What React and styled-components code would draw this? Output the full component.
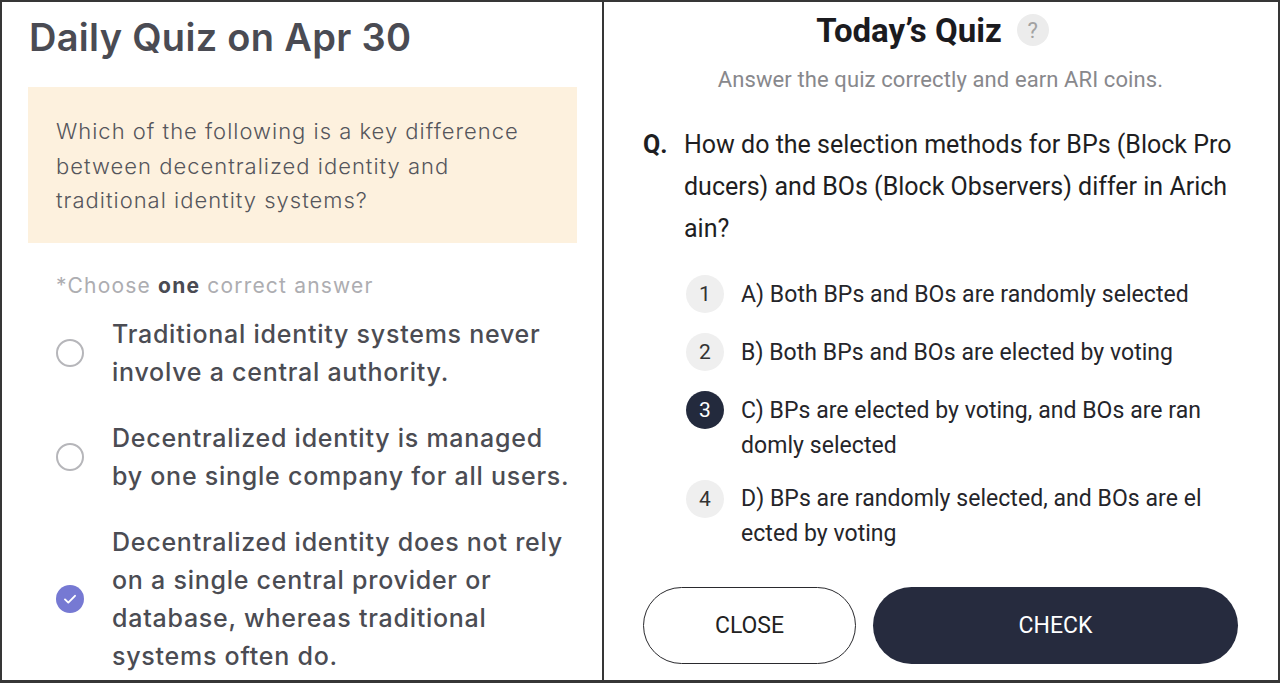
import React from "react";
import styled, { createGlobalStyle } from "styled-components";

const Global = createGlobalStyle`
  html, body { margin: 0; padding: 0; background: #fff; }
  * { box-sizing: border-box; }
`;

const Frame = styled.div`
  width: 1280px;
  height: 683px;
  border: 2px solid #363636;
  border-bottom-width: 3px;
  display: grid;
  grid-template-columns: 602px 1fr;
  overflow: hidden;
  background: #fff;
`;

const LeftPanel = styled.section`
  border-right: 2px solid #363636;
  padding: 13px 25px 0 26px;
  font-family: Inter, "Noto Sans", sans-serif;
  display: flex;
  flex-direction: column;
  overflow: hidden;
`;

const DailyTitle = styled.h1`
  margin: 0;
  font-size: 38px;
  line-height: 44px;
  font-weight: 600;
  letter-spacing: 0.3px;
  color: #4a4b53;
  padding-left: 1px;
`;

const QuestionBox = styled.div`
  margin-top: 28px;
  background: #fdf1de;
  padding: 27px 28px 25px;
  font-size: 22px;
  line-height: 34.5px;
  font-weight: 300;
  letter-spacing: 1px;
  color: #55565c;
`;

const Hint = styled.p`
  margin: 29px 0 0 28px;
  font-size: 21px;
  line-height: 28px;
  letter-spacing: 1.2px;
  color: #adadb1;
  b { font-weight: 700; color: #4a4b53; }
`;

const ChoiceList = styled.div`
  margin: 15px 0 0 28px;
  display: flex;
  flex-direction: column;
  gap: 28px;
`;

const Choice = styled.label`
  display: flex;
  align-items: center;
  gap: 28px;
`;

const Radio = styled.span`
  flex: none;
  width: 28px;
  height: 28px;
  border-radius: 50%;
  border: ${(p) => (p.$checked ? "none" : "2px solid #b6b6ba")};
  background: ${(p) => (p.$checked ? "#7679d3" : "#fff")};
  display: flex;
  align-items: center;
  justify-content: center;
`;

const ChoiceText = styled.span`
  font-size: 25px;
  line-height: 38px;
  font-weight: 500;
  letter-spacing: 0.75px;
  color: #4b4c53;
  width: 462px;
`;

const RightPanel = styled.section`
  padding: 8px 40px 16px 39px;
  font-family: Roboto, "Liberation Sans", sans-serif;
  display: flex;
  flex-direction: column;
  color: #1e1e22;
`;

const Header = styled.div`
  display: flex;
  align-items: center;
  justify-content: center;
  gap: 15px;
  height: 40px;
  padding-right: 16px;
`;

const QuizTitle = styled.h2`
  margin: 0;
  font-size: 33px;
  font-weight: 700;
  color: #1b1b1f;
`;

const HelpBadge = styled.span`
  width: 32px;
  height: 32px;
  border-radius: 50%;
  background: #ececec;
  color: #a2a2a2;
  font-size: 22px;
  display: flex;
  align-items: center;
  justify-content: center;
`;

const Subtitle = styled.p`
  margin: 16px 0 0;
  text-align: center;
  font-size: 22px;
  line-height: 28px;
  color: #88888c;
  letter-spacing: 0.1px;
`;

const QuestionRow = styled.div`
  margin-top: 30px;
  display: flex;
  font-size: 25px;
  line-height: 42px;
`;

const QMark = styled.span`
  width: 41px;
  flex: none;
  font-weight: 700;
  font-size: 25px;
`;

const AnswerList = styled.div`
  margin: 25px 0 0 43px;
  display: flex;
  flex-direction: column;
  gap: 20px;
`;

const Answer = styled.div`
  display: flex;
  align-items: flex-start;
  gap: 17px;
  margin-top: ${(p) => p.$shift || 0}px;
`;

const Num = styled.span`
  flex: none;
  width: 38px;
  height: 38px;
  border-radius: 50%;
  background: ${(p) => (p.$active ? "#232a3d" : "#efefef")};
  color: ${(p) => (p.$active ? "#fff" : "#333")};
  font-size: 21px;
  display: flex;
  align-items: center;
  justify-content: center;
`;

const AnswerText = styled.span`
  padding-top: 1.5px;
  font-size: 23px;
  line-height: 35px;
  letter-spacing: 0.05px;
  color: #25252a;
`;

const Buttons = styled.div`
  margin-top: auto;
  display: flex;
  gap: 17px;
`;

const Btn = styled.button`
  height: 77px;
  border-radius: 39px;
  font-family: Roboto, "Liberation Sans", sans-serif;
  font-size: 23px;
  border: ${(p) => (p.$primary ? "none" : "1.5px solid #2a2a2e")};
  background: ${(p) => (p.$primary ? "#262b3e" : "#fff")};
  color: ${(p) => (p.$primary ? "#fff" : "#222")};
  width: ${(p) => (p.$primary ? "auto" : "213px")};
  flex: ${(p) => (p.$primary ? "1" : "none")};
`;

const Check = () => (
  <svg width="16" height="16" viewBox="0 0 16 16" fill="none">
    <path d="M3 8.4l3.3 3.2L13 4.8" stroke="#fff" strokeWidth="1.9" strokeLinecap="round" strokeLinejoin="round" />
  </svg>
);

const choices = [
  { text: "Traditional identity systems never involve a central authority.", checked: false },
  { text: "Decentralized identity is managed by one single company for all users.", checked: false },
  {
    text: "Decentralized identity does not rely on a single central provider or database, whereas traditional systems often do.",
    checked: true,
  },
];

const answers = [
  ["A) Both BPs and BOs are randomly selected"],
  ["B) Both BPs and BOs are elected by voting"],
  ["C) BPs are elected by voting, and BOs are ran", "domly selected"],
  ["D) BPs are randomly selected, and BOs are el", "ected by voting"],
];

export default function App() {
  return (
    <>
      <Global />
      <Frame>
        <LeftPanel>
          <DailyTitle>Daily Quiz on Apr 30</DailyTitle>
          <QuestionBox>
            Which of the following is a key difference between decentralized identity and traditional identity
            systems?
          </QuestionBox>
          <Hint>
            *Choose <b>one</b> correct answer
          </Hint>
          <ChoiceList>
            {choices.map((c, i) => (
              <Choice key={i}>
                <Radio $checked={c.checked}>{c.checked && <Check />}</Radio>
                <ChoiceText>{c.text}</ChoiceText>
              </Choice>
            ))}
          </ChoiceList>
        </LeftPanel>
        <RightPanel>
          <Header>
            <QuizTitle>Today’s Quiz</QuizTitle>
            <HelpBadge>?</HelpBadge>
          </Header>
          <Subtitle>Answer the quiz correctly and earn ARI coins.</Subtitle>
          <QuestionRow>
            <QMark>Q.</QMark>
            <span>
              How do the selection methods for BPs (Block Pro
              <br />
              ducers) and BOs (Block Observers) differ in Arich
              <br />
              ain?
            </span>
          </QuestionRow>
          <AnswerList>
            {answers.map((lines, i) => (
              <Answer key={i} $shift={i === 3 ? -3 : 0}>
                <Num $active={i === 2}>{i + 1}</Num>
                <AnswerText>
                  {lines.map((l, j) => (
                    <React.Fragment key={j}>
                      {j > 0 && <br />}
                      {l}
                    </React.Fragment>
                  ))}
                </AnswerText>
              </Answer>
            ))}
          </AnswerList>
          <Buttons>
            <Btn>CLOSE</Btn>
            <Btn $primary>CHECK</Btn>
          </Buttons>
        </RightPanel>
      </Frame>
    </>
  );
}
